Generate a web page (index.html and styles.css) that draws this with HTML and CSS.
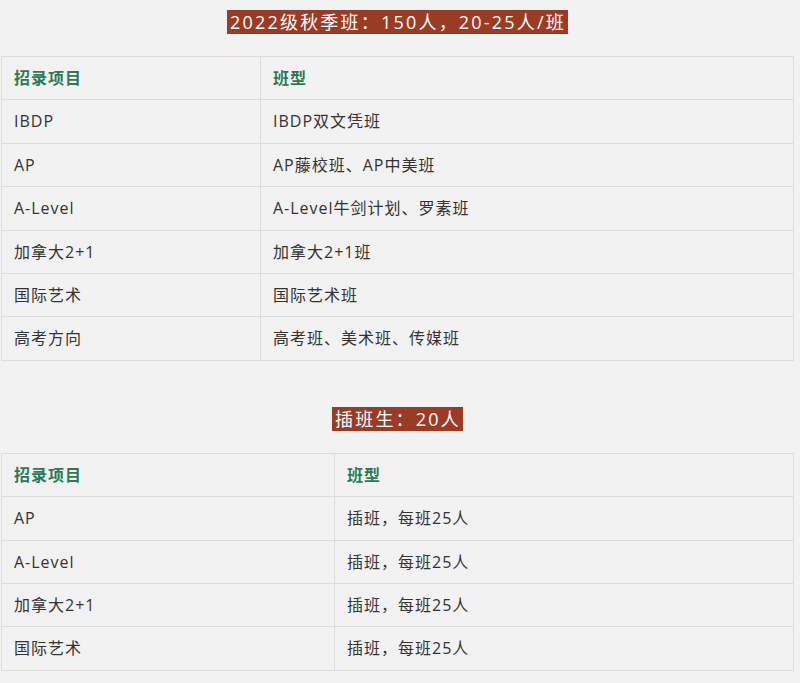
FILE: index.html
```html
<!DOCTYPE html>
<html lang="zh-CN">
<head>
<meta charset="utf-8">
<title>招录项目</title>
<link rel="stylesheet" href="styles.css">
</head>
<body>
<div class="page">
  <p class="title"><span class="tag">2022级秋季班：150人，20-25人/班</span></p>
  <table class="grid grid-a">
    <thead>
      <tr><th class="c1">招录项目</th><th>班型</th></tr>
    </thead>
    <tbody>
      <tr><td>IBDP</td><td>IBDP双文凭班</td></tr>
      <tr><td>AP</td><td>AP藤校班、AP中美班</td></tr>
      <tr><td>A-Level</td><td>A-Level牛剑计划、罗素班</td></tr>
      <tr><td>加拿大2+1</td><td>加拿大2+1班</td></tr>
      <tr><td>国际艺术</td><td>国际艺术班</td></tr>
      <tr><td>高考方向</td><td>高考班、美术班、传媒班</td></tr>
    </tbody>
  </table>

  <p class="title title-2"><span class="tag">插班生：20人</span></p>
  <table class="grid grid-b">
    <thead>
      <tr><th class="c1">招录项目</th><th>班型</th></tr>
    </thead>
    <tbody>
      <tr><td>AP</td><td>插班，每班25人</td></tr>
      <tr><td>A-Level</td><td>插班，每班25人</td></tr>
      <tr><td>加拿大2+1</td><td>插班，每班25人</td></tr>
      <tr><td>国际艺术</td><td>插班，每班25人</td></tr>
    </tbody>
  </table>
</div>
</body>
</html>
```

FILE: styles.css
```css
html, body {
  margin: 0;
  padding: 0;
  background: #f2f2f2;
}
body {
  font-family: "Open Sans", "Noto Sans CJK SC", sans-serif;
  color: #333333;
  font-size: 16px;
}
.page {
  padding: 0 6px 0 1px;
}
.title {
  margin: 0;
  padding-top: 11px;
  height: 56px;
  box-sizing: border-box;
  text-align: center;
  font-size: 18px;
  line-height: 22px;
}
.title-2 {
  margin-top: 36px;
}
.tag {
  background: #9a3b26;
  color: #ffffff;
  letter-spacing: 2.2px;
  padding: 0 2px 0 3px;
}
.grid {
  width: 793px;
  border-collapse: collapse;
  border: 1px solid #dcdcdc;
}
.grid th,
.grid td {
  border: 1px solid #dcdcdc;
  text-align: left;
  padding: 9px 12px 8px;
  line-height: 25.4px;
  font-weight: normal;
  letter-spacing: 1px;
}
.grid th {
  color: #2c7a55;
  font-weight: bold;
}
.grid-a .c1 {
  width: 234px;
}
.grid-b .c1 {
  width: 308px;
}
```
